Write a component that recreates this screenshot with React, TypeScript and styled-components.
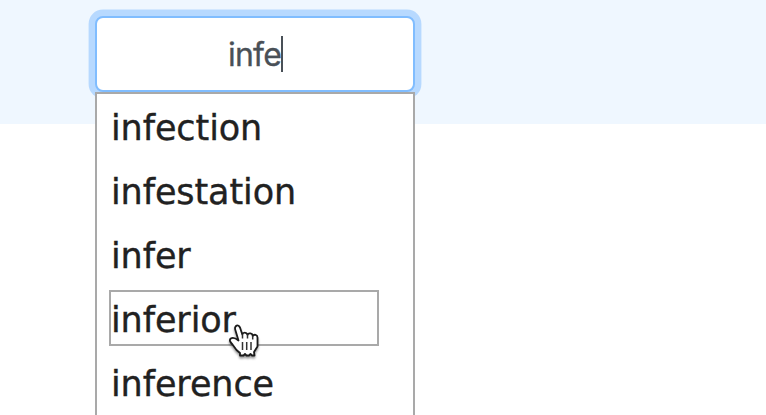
import React from "react";
import styled, { createGlobalStyle } from "styled-components";

const GlobalStyle = createGlobalStyle`
  *, *::before, *::after { box-sizing: border-box; }
  body { margin: 0; background: #fff; overflow: hidden; }
`;

const Page = styled.main`
  height: 415px;
  overflow: hidden;
  background: #fff;
`;

const Band = styled.section`
  height: 124px;
  padding: 16px 0 0 95px;
  background: #eff7ff;
`;

const Autocomplete = styled.div`
  position: relative;
  width: 320px;
`;

const Field = styled.div`
  display: flex;
  align-items: center;
  justify-content: center;
  height: 76px;
  padding-left: 1px;
  border: 2px solid #80bdff;
  border-radius: 8px;
  background: #fff;
  box-shadow: 0 0 0 6.4px #b7d9ff;
`;

const Query = styled.span`
  padding-top: 2px;
  font: 400 32px/38px Inter, sans-serif;
  letter-spacing: -0.75px;
  color: #495057;
  -webkit-text-stroke: 0.3px #495057;
`;

const Caret = styled.span`
  width: 2px;
  height: 36px;
  background: #495057;
`;

const Menu = styled.ul`
  position: absolute;
  top: 76px;
  left: 0;
  width: 320px;
  height: 400px;
  margin: 0;
  padding: 4px 12px;
  display: flex;
  flex-direction: column;
  gap: 8px;
  list-style: none;
  border: 2px solid #a9a9a9;
  background: #fff;
`;

const Option = styled.li<{ $active?: boolean }>`
  flex: none;
  position: relative;
  width: 270px;
  height: 56px;
  border: 2px solid ${(p) => (p.$active ? "#a9a9a9" : "transparent")};
  font: 400 35px/56px "DejaVu Sans", Verdana, sans-serif;
  letter-spacing: -0.1px;
  -webkit-text-stroke: 0.35px #212121;
  color: #212121;
  white-space: nowrap;
`;

const Pointer = styled.svg`
  position: absolute;
  left: 115px;
  top: 29px;
  width: 38px;
  height: 42px;
  filter: drop-shadow(0 2px 1px rgba(0, 0, 0, 0.4));
`;

const words = ["infection", "infestation", "infer", "inferior", "inference"];

function HandPointer() {
  return (
    <Pointer viewBox="0 0 38 42" aria-hidden="true">
      <path
        d="M11 4.5C8.8 5 8.7 7.5 9.5 9.5L12.5 19.5C10 17.5 7 16 4.8 17.5C3 19 4 21 6.5 23.5L10.5 29L14 32V34.5H17.5L19 33L20.5 34.5H23L24.5 33L26 34.5H28.5L28 31L31.5 25.5V16.5C31.5 13.5 28 13 26.7 15C26.5 12 22.5 11.5 21.5 13.8C20.5 10.8 17 11 16.3 13.5L14 6.5C13.2 4.8 12 4.2 11 4.5Z"
        fill="#fff"
        stroke="#1b1b1b"
        strokeWidth="1.8"
        strokeLinejoin="round"
      />
      <path d="M16.5 13.5V17.5M21.5 13.5V17.5M26.7 15V18.5M16.5 21V29M20.7 21V29M25 21V29" fill="none" stroke="#333" strokeWidth="1.5" />
    </Pointer>
  );
}

export default function App() {
  return (
    <Page>
      <GlobalStyle />
      <Band>
        <Autocomplete>
          <Field>
            <Query>infe</Query>
            <Caret />
          </Field>
          <Menu>
            {words.map((word) => (
              <Option key={word} $active={word === "inferior"}>
                {word}
                {word === "inferior" && <HandPointer />}
              </Option>
            ))}
          </Menu>
        </Autocomplete>
      </Band>
    </Page>
  );
}
